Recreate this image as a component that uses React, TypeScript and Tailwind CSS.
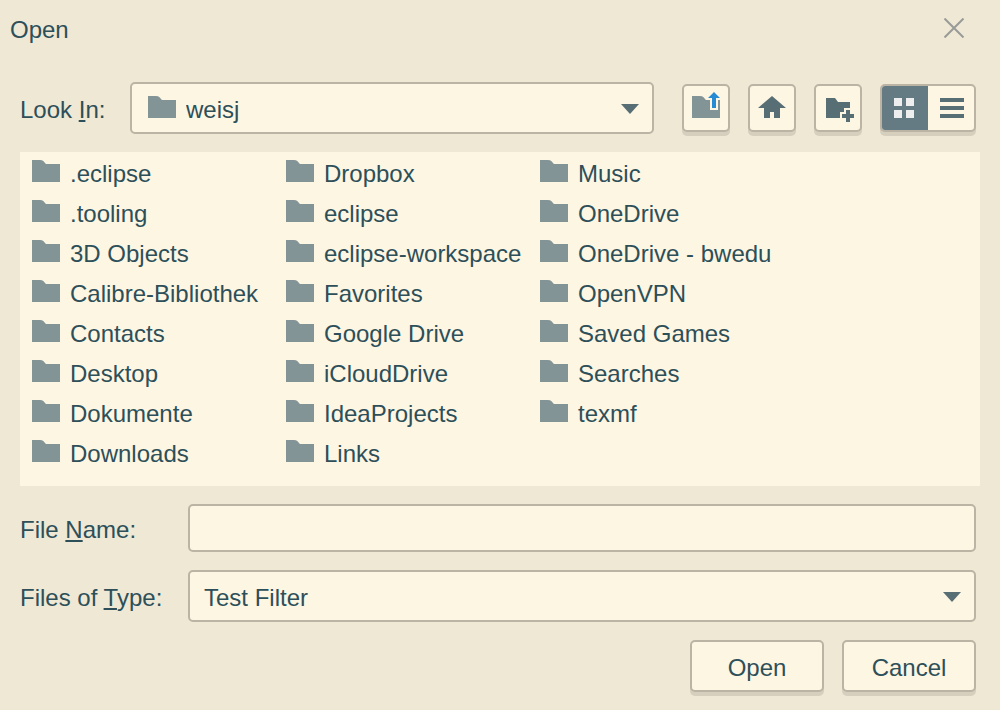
import { useState, type ReactNode } from "react";

const folders = [
  ".eclipse",
  ".tooling",
  "3D Objects",
  "Calibre-Bibliothek",
  "Contacts",
  "Desktop",
  "Dokumente",
  "Downloads",
  "Dropbox",
  "eclipse",
  "eclipse-workspace",
  "Favorites",
  "Google Drive",
  "iCloudDrive",
  "IdeaProjects",
  "Links",
  "Music",
  "OneDrive",
  "OneDrive - bwedu",
  "OpenVPN",
  "Saved Games",
  "Searches",
  "texmf",
];

const raised =
  "rounded-[5px] border-2 border-[#bbb3a4] bg-[#fdf6e3] shadow-[0_4px_0_#d6cfbe] focus:outline-none";
const field =
  "w-full appearance-none rounded-[5px] border-2 border-[#bbb3a4] bg-[#fdf6e3] focus:outline-none";

function FolderIcon() {
  return (
    <svg width="28" height="22" viewBox="0 0 28 22" className="shrink-0" aria-hidden="true">
      <path d="M0 0H8C11 0 12 1.500 13 3Q13.500 4 14.500 4H28V22H0Z" fill="#839496" />
    </svg>
  );
}

function UpFolderIcon() {
  return (
    <svg width="28" height="28" viewBox="0 0 28 28" className="block" aria-hidden="true">
      <path d="M0 5H8C11 5 12 6.500 13 8Q13.500 9 14.500 9H18V19H26V9H28V27H0Z" fill="#839496" />
      <path d="M22 1L28 7H24V17H20V7H16Z" fill="#268bd2" />
    </svg>
  );
}

function HomeIcon() {
  return (
    <svg width="28" height="22" viewBox="0 0 28 22" className="block" aria-hidden="true">
      <path d="M14 0L28 12H22V22H16V16H12V22H6V12H0Z" fill="#586e75" />
    </svg>
  );
}

function NewFolderIcon() {
  return (
    <svg width="28" height="24" viewBox="0 0 28 24" className="block" aria-hidden="true">
      <path d="M0 0H9L12 4H24V10H18V14H14V20H0Z" fill="#586e75" />
      <path d="M20 12H24V16H28V20H24V24H20V20H16V16H20Z" fill="#586e75" />
    </svg>
  );
}

function GridIcon({ color }: { color: string }) {
  return (
    <svg width="20" height="20" viewBox="0 0 20 20" aria-hidden="true">
      <path d="M0 0H8V8H0ZM12 0H20V8H12ZM0 12H8V20H0ZM12 12H20V20H12Z" fill={color} />
    </svg>
  );
}

function ListIcon({ color }: { color: string }) {
  return (
    <svg width="24" height="20" viewBox="0 0 24 20" aria-hidden="true">
      <path d="M0 0H24V4H0ZM0 8H24V12H0ZM0 16H24V20H0Z" fill={color} />
    </svg>
  );
}

function Arrow() {
  return (
    <span className="pointer-events-none absolute inset-y-0 right-[15px] flex items-center pt-[2px]">
      <svg width="18" height="10" viewBox="0 0 18 10" aria-hidden="true">
        <path d="M0 0H18L9 10Z" fill="#586e75" />
      </svg>
    </span>
  );
}

function ToolButton({ label, children }: { label: string; children: ReactNode }) {
  return (
    <button
      type="button"
      aria-label={label}
      className={`flex size-12 shrink-0 items-center justify-center ${raised}`}
    >
      {children}
    </button>
  );
}

function Mnemonic({ children }: { children: ReactNode }) {
  return (
    <span className="underline decoration-2 underline-offset-2 [text-decoration-skip-ink:none]">
      {children}
    </span>
  );
}

export default function App() {
  const [view, setView] = useState<"grid" | "list">("grid");
  const [fileName, setFileName] = useState("");
  const on = "bg-[#657b83]";

  return (
    <form
      className="flex min-h-screen flex-col bg-[#eee8d5] pb-[18px] font-['Liberation_Sans',Arial,sans-serif] text-[24px] leading-7 text-[#2d4f59]"
      onSubmit={(e) => e.preventDefault()}
    >
      <header className="flex h-14 items-center justify-between pt-1 pr-9 pl-[10px]">
        <h1>Open</h1>
        <button type="button" aria-label="Close" className="mb-1 focus:outline-none">
          <svg width="20" height="20" viewBox="0 0 20 20" aria-hidden="true">
            <path d="M0.500 0.500L19.500 19.500M19.500 0.500L0.500 19.500" stroke="#999b98" strokeWidth="2" />
          </svg>
        </button>
      </header>

      <div className="mt-[26px] flex items-center pr-6 pl-5">
        <label htmlFor="look-in" className="w-[110px] shrink-0 pt-1">
          Look <Mnemonic>I</Mnemonic>n:
        </label>
        <div className="relative min-w-0 flex-1">
          <select id="look-in" className={`h-[52px] pt-1 pr-10 pl-[54px] ${field}`}>
            <option>weisj</option>
          </select>
          <span className="pointer-events-none absolute inset-y-0 left-[18px] flex items-center pb-[2px]">
            <FolderIcon />
          </span>
          <Arrow />
        </div>
        <div className="ml-7 flex shrink-0 gap-[18px]">
          <ToolButton label="Up one level">
            <span className="pb-[6px]">
              <UpFolderIcon />
            </span>
          </ToolButton>
          <ToolButton label="Home">
            <span className="pb-[2px]">
              <HomeIcon />
            </span>
          </ToolButton>
          <ToolButton label="New folder">
            <span className="pt-1 pl-1">
              <NewFolderIcon />
            </span>
          </ToolButton>
          <div role="group" aria-label="View" className={`flex h-12 w-24 overflow-hidden ${raised}`}>
            <button
              type="button"
              aria-label="Grid view"
              aria-pressed={view === "grid"}
              onClick={() => setView("grid")}
              className={`flex flex-1 items-center justify-center pr-[2px] focus:outline-none ${view === "grid" ? on : ""}`}
            >
              <GridIcon color={view === "grid" ? "#eeeeee" : "#586e75"} />
            </button>
            <button
              type="button"
              aria-label="List view"
              aria-pressed={view === "list"}
              onClick={() => setView("list")}
              className={`flex flex-1 items-center justify-center pl-[2px] focus:outline-none ${view === "list" ? on : ""}`}
            >
              <ListIcon color={view === "list" ? "#eeeeee" : "#586e75"} />
            </button>
          </div>
        </div>
      </div>

      <ul
        aria-label="Folders"
        className="mx-5 mt-[18px] grid flex-1 auto-cols-[254px] grid-flow-col grid-rows-[repeat(8,40px)] overflow-x-auto bg-[#fdf6e3] pb-[14px] pl-3"
      >
        {folders.map((name) => (
          <li key={name} className="flex items-start gap-[10px] pt-2 whitespace-nowrap">
            <FolderIcon />
            <span>{name}</span>
          </li>
        ))}
      </ul>

      <div className="mt-[18px] grid grid-cols-[168px_1fr] items-center gap-y-[18px] pr-6 pl-5">
        <label htmlFor="file-name" className="pt-1">
          File <Mnemonic>N</Mnemonic>ame:
        </label>
        <input
          id="file-name"
          type="text"
          value={fileName}
          onChange={(e) => setFileName(e.target.value)}
          className={`h-12 px-[14px] ${field}`}
        />
        <label htmlFor="file-type" className="pt-1">
          Files of <Mnemonic>T</Mnemonic>ype:
        </label>
        <div className="relative">
          <select id="file-type" className={`h-[52px] pt-1 pr-10 pl-[14px] ${field}`}>
            <option>Test Filter</option>
          </select>
          <Arrow />
        </div>
      </div>

      <div className="mt-[18px] flex justify-end gap-[18px] pr-6">
        <button type="submit" className={`h-[52px] w-[134px] pt-1 ${raised}`}>
          Open
        </button>
        <button type="button" className={`h-[52px] w-[134px] pt-1 ${raised}`}>
          Cancel
        </button>
      </div>
    </form>
  );
}
